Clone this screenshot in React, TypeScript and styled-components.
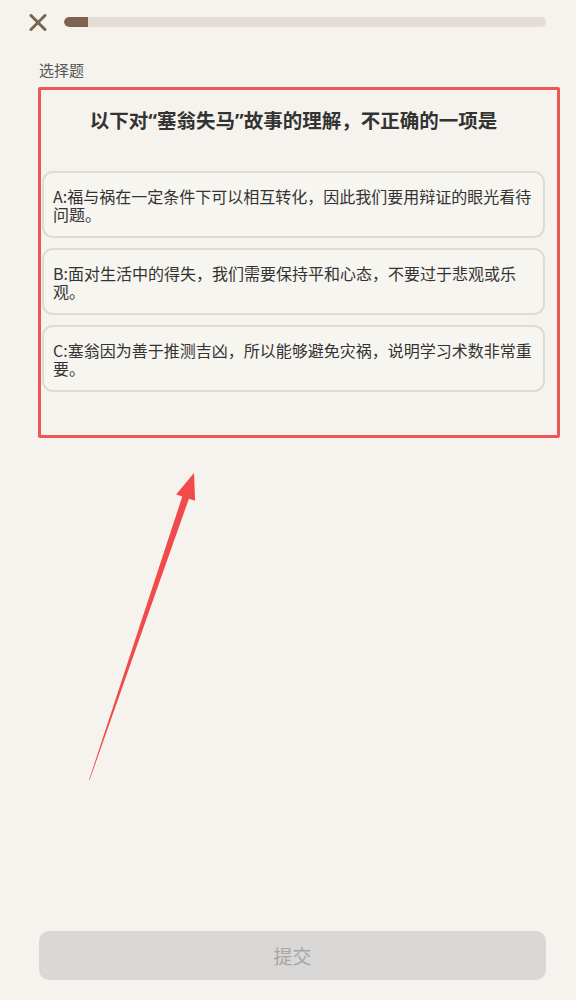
import React from "react";
import styled, { createGlobalStyle } from "styled-components";

const Global = createGlobalStyle`
  html, body { margin: 0; padding: 0; background: #f6f3ee; }
  body { font-family: "Noto Sans CJK SC", "Noto Sans", sans-serif; color: #333; }
`;

const Page = styled.div`
  position: relative;
  height: 1000px;
  display: flex;
  flex-direction: column;
  background: #f6f3ee;
  overflow: hidden;
`;

const Header = styled.div`
  display: flex;
  align-items: center;
  gap: 16px;
  height: 18px;
  padding: 13px 30px 0 28px;
`;

const CloseButton = styled.button`
  width: 20px;
  height: 18px;
  padding: 0;
  border: none;
  background: none;
  display: flex;
  align-items: center;
  justify-content: center;
`;

const Track = styled.div`
  flex: 1;
  height: 10px;
  border-radius: 5px;
  background: #e3ddd6;
  overflow: hidden;
`;

const Fill = styled.div`
  height: 100%;
  background: #7d6350;
  border-radius: 5px 0 0 5px;
`;

const Label = styled.div`
  margin: 29px 30px 0 39px;
  font-size: 15px;
  line-height: 20px;
  color: #555;
`;

const Question = styled.section`
  position: relative;
  margin: 7px 30px 0 39px;
  padding: 20px 1px 46px 3px;
  display: flex;
  flex-direction: column;
`;

const Outline = styled.div`
  position: absolute;
  top: 0;
  bottom: 0;
  left: -1px;
  right: -14px;
  border: 3px solid #ec5656;
  border-radius: 2px;
  pointer-events: none;
`;

const Title = styled.h2`
  margin: 0 0 37px;
  font-size: 19.5px;
  line-height: 26px;
  font-weight: 700;
  text-align: center;
  color: #333;
`;

const Quote = styled.span`
  font-family: "Noto Sans", sans-serif;
`;

const Options = styled.div`
  display: flex;
  flex-direction: column;
  gap: 10px;
`;

const Option = styled.div`
  border: 2px solid #dedbd6;
  border-radius: 11px;
  background: #f7f5f0;
  padding: 14px 6px 13px 9px;
  font-size: 16px;
  line-height: 18px;
  color: #333;
`;

const Spacer = styled.div`
  flex: 1;
`;

const Submit = styled.button`
  margin: 0 30px 20px 39px;
  height: 49px;
  border: none;
  border-radius: 10px;
  background: #d9d8d6;
  color: #a6a6a6;
  font-family: "Noto Sans CJK SC", sans-serif;
  font-size: 19px;
`;

const ArrowLayer = styled.svg`
  position: absolute;
  left: 0;
  top: 0;
  pointer-events: none;
`;

const options = [
  "A:福与祸在一定条件下可以相互转化，因此我们要用辩证的眼光看待问题。",
  "B:面对生活中的得失，我们需要保持平和心态，不要过于悲观或乐观。",
  "C:塞翁因为善于推测吉凶，所以能够避免灾祸，说明学习术数非常重要。",
];

export default function App() {
  const progress = 5;
  return (
    <>
      <Global />
      <Page>
        <Header>
          <CloseButton aria-label="关闭">
            <svg width="18" height="17" viewBox="0 0 18 17">
              <path d="M2 1.5 L16 15.5 M16 1.5 L2 15.5" stroke="#7b6452" strokeWidth="3" strokeLinecap="round" />
            </svg>
          </CloseButton>
          <Track>
            <Fill style={{ width: `${progress}%` }} />
          </Track>
        </Header>
        <Label>选择题</Label>
        <Question>
          <Title>
            以下对<Quote>“</Quote>塞翁失马<Quote>”</Quote>故事的理解，不正确的一项是
          </Title>
          <Options>
            {options.map((o) => (
              <Option key={o}>{o}</Option>
            ))}
          </Options>
          <Outline />
        </Question>
        <Spacer />
        <Submit>提交</Submit>
        <ArrowLayer width="576" height="1000" viewBox="0 0 576 1000">
          <polygon
            points="89,780 182.3,496.5 176.1,494.4 194,473 195.1,500.8 188.9,498.7 89.6,780"
            fill="#f04a4a"
          />
        </ArrowLayer>
      </Page>
    </>
  );
}
